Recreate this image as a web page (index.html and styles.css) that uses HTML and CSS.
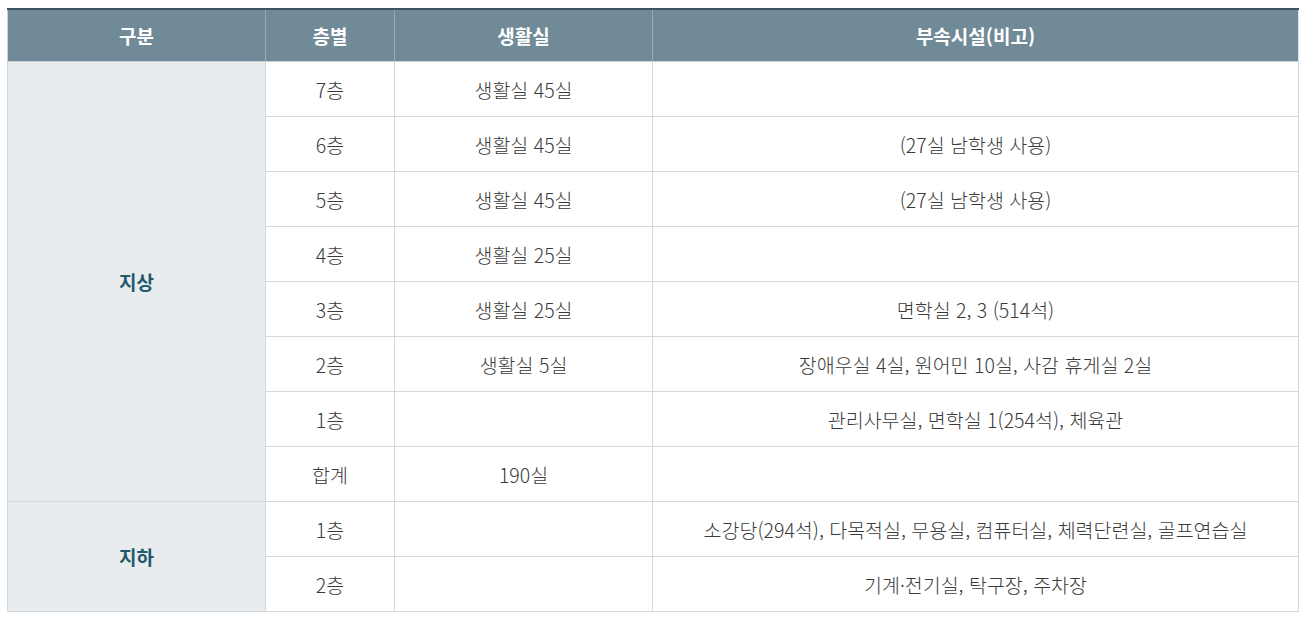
FILE: index.html
```html
<!DOCTYPE html>
<html lang="ko">
<head>
<meta charset="utf-8">
<link rel="stylesheet" href="styles.css">
</head>
<body>
<div class="wrap">
<table class="facility">
  <colgroup>
    <col class="c1"><col class="c2"><col class="c3"><col class="c4">
  </colgroup>
  <thead>
    <tr><th>구분</th><th>층별</th><th>생활실</th><th>부속시설(비고)</th></tr>
  </thead>
  <tbody>
    <tr><td class="grp" rowspan="8">지상</td><td>7층</td><td>생활실 45실</td><td></td></tr>
    <tr><td>6층</td><td>생활실 45실</td><td>(27실 남학생 사용)</td></tr>
    <tr><td>5층</td><td>생활실 45실</td><td>(27실 남학생 사용)</td></tr>
    <tr><td>4층</td><td>생활실 25실</td><td></td></tr>
    <tr><td>3층</td><td>생활실 25실</td><td>면학실 2, 3 (514석)</td></tr>
    <tr><td>2층</td><td>생활실 5실</td><td>장애우실 4실, 원어민 10실, 사감 휴게실 2실</td></tr>
    <tr><td>1층</td><td></td><td>관리사무실, 면학실 1(254석), 체육관</td></tr>
    <tr><td>합계</td><td>190실</td><td></td></tr>
    <tr><td class="grp" rowspan="2">지하</td><td>1층</td><td></td><td>소강당(294석), 다목적실, 무용실, 컴퓨터실, 체력단련실, 골프연습실</td></tr>
    <tr><td>2층</td><td></td><td>기계·전기실, 탁구장, 주차장</td></tr>
  </tbody>
</table>
</div>
</body>
</html>
```
FILE: styles.css
```css
html, body {
  margin: 0;
  padding: 0;
  background: #ffffff;
}
.wrap {
  padding: 8px 8px 0 7px;
}
.facility {
  width: 1291px;
  border-collapse: collapse;
  table-layout: fixed;
  font-family: "Noto Sans CJK KR", "Noto Sans", sans-serif;
  font-size: 19.5px;
  color: #3a3a3a;
  border-top: 2px solid #3b5462;
}
.c1 { width: 258px; }
.c2 { width: 129px; }
.c3 { width: 258px; }
.c4 { width: 646px; }
.facility th {
  height: 51px;
  background: #718a97;
  color: #ffffff;
  font-size: 19px;
  font-weight: 700;
  text-align: center;
  padding: 0;
  border-left: 1px solid #9aabb4;
  border-right: 1px solid #9aabb4;
  border-bottom: 1px solid #c9d1d7;
}
.facility th:first-child { border-left: 1px solid #c9d1d7; }
.facility th:last-child { border-right: 1px solid #dde3e7; }
.facility td {
  height: 54px;
  padding: 0;
  text-align: center;
  border: 1px solid #d3d9de;
  font-weight: 300;
  letter-spacing: 0;
}
.facility td.grp {
  background: #e8ecef;
  color: #1f5a6b;
  font-size: 19px;
  font-weight: 700;
}
```
